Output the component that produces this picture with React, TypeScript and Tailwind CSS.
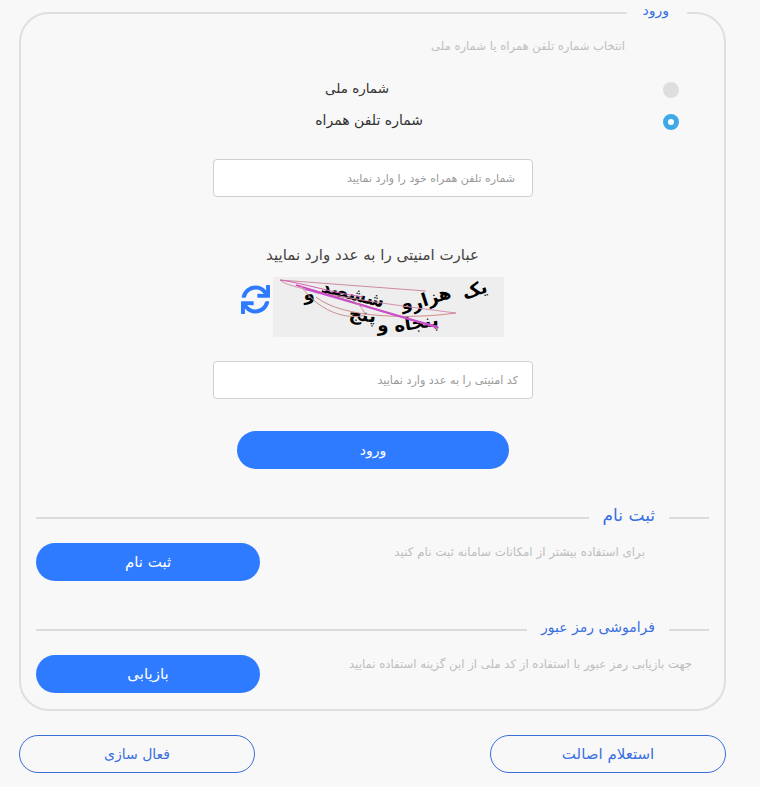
import { FaSync } from "react-icons/fa";

const font = "font-['DejaVu_Sans','Noto_Sans',sans-serif]";

function Divider({ title, titleSize, children, button, descClass }: { title: string; titleSize: string; children: string; button: string; descClass: string }) {
  return (
    <div>
      <div className="flex items-center">
        <span className="h-[2px] w-[40px] bg-[#dcdcdc]" />
        <span className={`${titleSize} px-[14px] pb-[6px] leading-[20px] text-[#3a6fe0]`}>{title}</span>
        <span className="h-[2px] flex-1 bg-[#dcdcdc]" />
      </div>
      <div className="mt-[12px] flex items-start justify-between">
        <p className={`${descClass} mt-[1px] leading-[16px] text-[#bdbdbd]`}>{children}</p>
        <button className="h-[38px] w-[224px] rounded-full bg-[#2f7bff] text-[15px] text-white">{button}</button>
      </div>
    </div>
  );
}

function Captcha() {
  const words = [
    { t: "یک", x: "left-[189px] top-[4px] rotate-[-18deg]" },
    { t: "هزار", x: "left-[138px] top-[12px] rotate-[-18deg]" },
    { t: "و", x: "left-[128px] top-[17px] rotate-[-12deg]" },
    { t: "ششصد", x: "left-[48px] top-[8px] rotate-[14deg]" },
    { t: "و", x: "left-[30px] top-[8px] rotate-[-8deg]" },
    { t: "پنجاه", x: "left-[121px] top-[37px] rotate-[-8deg]" },
    { t: "و", x: "left-[104px] top-[39px] rotate-[-4deg]" },
    { t: "پنج", x: "left-[76px] top-[29px] rotate-[6deg]" },
  ];
  return (
    <div className="relative h-[60px] w-[231px] overflow-hidden bg-[#eeeeee]">
      {words.map((w, i) => (
        <span key={i} className={`absolute ${w.x} text-[18px] font-bold leading-[18px] text-black`}>
          {w.t}
        </span>
      ))}
      <svg className="absolute inset-0" width="231" height="60" viewBox="0 0 231 60" fill="none">
        <path d="M7 3L153 14" stroke="#d08aa0" strokeWidth="1" />
        <path d="M7 3C12 10 70 22 183 36" stroke="#d58fb0" strokeWidth="1" />
        <path d="M183 36C140 42 70 42 43 20" stroke="#d28a8a" strokeWidth="1" />
        <path d="M7 3C30 6 60 16 90 20" stroke="#d060b0" strokeWidth="1" />
        <path d="M23 8L165 51" stroke="#d040c0" strokeWidth="1.5" />
        <path d="M32 12C70 22 120 38 165 50" stroke="#c850c8" strokeWidth="2" />
        <path d="M27 8C50 40 80 42 92 38C90 30 84 26 80 24" stroke="#c99090" strokeWidth="1" />
      </svg>
    </div>
  );
}

export default function App() {
  return (
    <div dir="rtl" className={`${font} h-[787px] w-[760px] overflow-hidden bg-[#f8f8f8]`}>
      <div className="ml-auto mr-[34px] w-[707px]">
        <fieldset className="h-[711px] rounded-[30px] border-2 border-[#dfdfdf] px-[15px]">
          <legend className="mr-[22px] pb-[6px] pl-[15px] pr-[18px] text-[14px] leading-[20px] text-[#3a6fe0]">ورود</legend>
          <p className="mr-[84px] mt-[12px] text-[11.6px] leading-[16px] text-[#c0c0c0]">انتخاب شماره تلفن همراه یا شماره ملی</p>
          <div className="mt-[24px] flex items-center">
            <span className="mr-[30px] h-[16px] w-[16px] rounded-full bg-[#dedede]" />
            <span className="mb-[4px] mr-[274px] text-[13.5px] leading-[20px] text-[#333]">شماره ملی</span>
          </div>
          <div className="mt-[8px] flex items-center">
            <span className="mr-[30px] h-[16px] w-[16px] rounded-full border-[5px] border-[#3fa9e8] bg-white" />
            <span className="mb-[4px] mr-[240px] text-[14px] leading-[20px] text-[#333]">شماره تلفن همراه</span>
          </div>
          <input
            placeholder="شماره تلفن همراه خود را وارد نمایید"
            className="mr-[176px] mt-[25px] block h-[38px] w-[320px] rounded-[4px] border border-[#cfcfcf] bg-white px-[17px] text-[11px] outline-none placeholder:text-[#9a9a9a]"
          />
          <p className="mt-[48px] text-center text-[15px] leading-[20px] text-[#444]">عبارت امنیتی را به عدد وارد نمایید</p>
          <div className="mr-[205px] mt-[12px] flex items-start gap-[3px]">
            <Captcha />
            <FaSync className="mt-[8px] h-[29px] w-[29px] text-[#2f7bff]" />
          </div>
          <input
            placeholder="کد امنیتی را به عدد وارد نمایید"
            className="mr-[176px] mt-[24px] block h-[38px] w-[320px] rounded-[4px] border border-[#cfcfcf] bg-white px-[14px] text-[11.2px] outline-none placeholder:text-[#9a9a9a]"
          />
          <button className="mr-[200px] mt-[32px] block h-[38px] w-[272px] rounded-full bg-[#2f7bff] text-[14px] text-white">ورود</button>
          <div className="mt-[36px]">
            <Divider title="ثبت نام" titleSize="text-[17px]" button="ثبت نام" descClass="mr-[64px] text-[11.9px]">برای استفاده بیشتر از امکانات سامانه ثبت نام کنید</Divider>
          </div>
          <div className="mt-[36px]">
            <Divider title="فراموشی رمز عبور" titleSize="text-[14px]" button="بازیابی" descClass="mr-[17px] text-[11.7px]">جهت بازیابی رمز عبور با استفاده از کد ملی از این گزینه استفاده نمایید</Divider>
          </div>
        </fieldset>
        <div className="mt-[24px] flex justify-between">
          <button className="h-[38px] w-[236px] rounded-full border border-[#3a6fd8] text-[15px] text-[#3a6fe0]">استعلام اصالت</button>
          <button className="h-[38px] w-[236px] rounded-full border border-[#3a6fd8] text-[14px] text-[#3a6fe0]">فعال سازی</button>
        </div>
      </div>
    </div>
  );
}
